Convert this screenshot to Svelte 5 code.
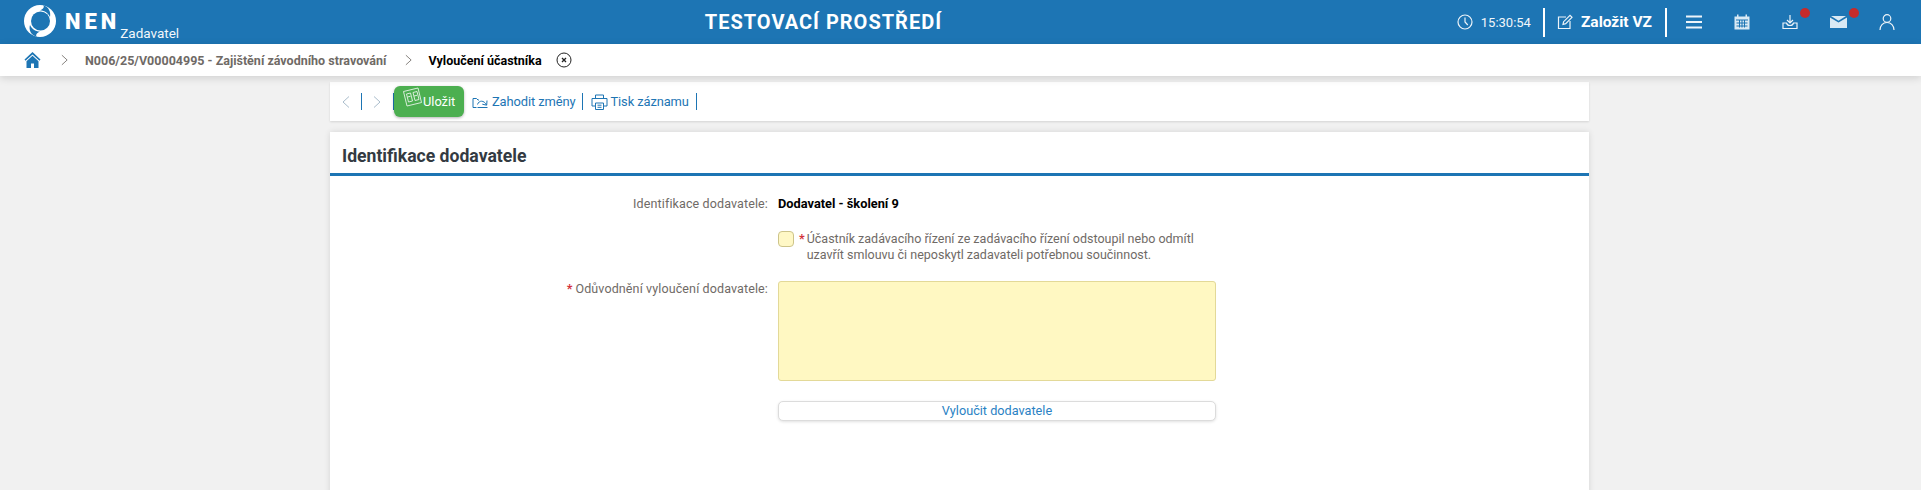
<script>
  const crumbs = "N006/25/V00004995 - Zajištění závodního stravování";
</script>

<div class="page">
  <header class="topbar">
    <div class="brand">
      <svg class="logo" viewBox="0 0 32 32" width="32" height="32">
        <circle cx="16" cy="16" r="16" fill="#fff"/>
        <circle cx="16.500" cy="16" r="9.500" fill="#1d75b4"/>
        <path d="M19 0C25 2 27 7 26 12 24 8 21 5.500 16 5.500 19 4 21 2 19 0z" fill="#1d75b4"/>
        <path d="M13 32C7 30 4.500 25 6 20 8 24 11 26.500 16 26.500 13 28 11 30 13 32z" fill="#1d75b4"/>
      </svg>
      <span class="nen">NEN</span>
      <span class="role">Zadavatel</span>
    </div>
    <div class="env">TESTOVACÍ PROSTŘEDÍ</div>
    <div class="tools">
      <svg class="ic clock" viewBox="0 0 16 16" width="16" height="16"><circle cx="8" cy="8" r="7" /><path d="M8 3.500V8l2.800 3" /></svg>
      <span class="time">15:30:54</span>
      <span class="sep"></span>
      <svg class="ic edit" viewBox="0 0 16 16" width="16" height="16"><path d="M9 3H1.500v11.500H13V7" /><path d="M6 10.500l.6-2.800L13 1.300l2 2-6.300 6.400z" /></svg>
      <span class="create">Založit VZ</span>
      <span class="sep"></span>
      <svg class="ic menu" viewBox="0 0 16 14" width="16" height="14"><path d="M0 1.500h16M0 7h16M0 12.500h16" stroke-width="2"/></svg>
      <svg class="ic cal" viewBox="0 0 16 16" width="16" height="16"><path class="fill" d="M.5 2.500h2.500V.5h1.500v2h7v-2H13v2h2.500V15.500H.5z"/><path class="grid" d="M2 6h12M2.500 9h11M2.500 12h11M5.500 6v7.500M8 6v7.500M10.500 6v7.500"/></svg>
      <span class="badged dl">
        <svg class="ic" viewBox="0 0 16 16" width="16" height="16"><path d="M8 1v7.500M5 6l3 3 3-3" /><path d="M4.500 9H1v5.500h14V9h-3.500c-.5 2-2 2.500-3.500 2.500S5 11 4.500 9z" /></svg>
        <i class="dot"></i>
      </span>
      <span class="badged mail">
        <svg class="ic" viewBox="0 0 17 12" width="17" height="12"><path class="fill" d="M0 1.500l8.500 5 8.500-5V12H0z"/><path class="fill" d="M1 0h15L8.500 4.800z"/></svg>
        <i class="dot"></i>
      </span>
      <svg class="ic user" viewBox="0 0 16 16" width="16" height="16"><circle cx="8" cy="4.500" r="3.800" /><path d="M1 16c0-4.500 3-7.500 7-7.500s7 3 7 7.500" /></svg>
    </div>
  </header>

  <nav class="crumbs">
    <svg class="home" viewBox="0 0 16 16" width="17" height="16"><path d="M8 0L0 7.500l1 1.200L8 2.400l7 6.300 1-1.200z" fill="#1d75b4"/><path d="M8 3.800L2 9.200V16h4.500v-4.500h3V16H14V9.200z" fill="#1d75b4"/></svg>
    <svg class="chev" viewBox="0 0 8 12" width="7" height="12"><path d="M1 .5l6 5.500-6 5.500"/></svg>
    <span class="crumb">{crumbs}</span>
    <svg class="chev" viewBox="0 0 8 12" width="7" height="12"><path d="M1 .5l6 5.500-6 5.500"/></svg>
    <span class="current">Vyloučení účastníka</span>
    <svg class="close" viewBox="0 0 16 16" width="16" height="16"><circle cx="8" cy="8" r="7"/><path d="M6 6l4 4M10 6l-4 4" stroke-width="1.300"/></svg>
  </nav>

  <main class="content">
    <div class="toolbar">
      <svg class="chev dim" viewBox="0 0 8 12" width="8" height="12"><path d="M7 .5L1 6l6 5.500"/></svg>
      <span class="vr first"></span>
      <svg class="chev dim" viewBox="0 0 8 12" width="8" height="12"><path d="M1 .5L7 6l-6 5.500"/></svg>
      <span class="vr second"></span>
      <button class="save">
        <svg viewBox="0 0 21 21" width="21" height="21"><path d="M1.500 4.500L16 1l3.500 14.500L5 19z"/><path d="M4.500 7l4-1 2 8-4 1zM11 5.500l4-1 2 8-4 1zM5.500 10l3-.7M12 9l3-.7"/></svg>
        <span>Uložit</span>
      </button>
      <a class="act discard">
        <svg viewBox="0 0 16 13" width="16" height="13"><path d="M4.500 12.500H1V3.500h3.500l1.500 1.500h1"/><path d="M5.500 9.500C7 5 12 5 14.500 10M15 5.500l-.3 4.700-4.400-1"/><path d="M5.500 12.500h10"/></svg>
        <span>Zahodit změny</span>
      </a>
      <span class="vr"></span>
      <a class="act print">
        <svg viewBox="0 0 17 16" width="17" height="16"><path d="M4.500 4.500V1h8v3.500M4.500 12H1V4.500h15V12h-3.500M4.500 9h8v6.500h-8zM6.500 11.200h4M6.500 13.300h4"/></svg>
        <span>Tisk záznamu</span>
      </a>
      <span class="vr"></span>
    </div>

    <section class="panel">
      <h2>Identifikace dodavatele</h2>
      <div class="form">
        <div class="row r1">
          <div class="label">Identifikace dodavatele:</div>
          <div class="value">Dodavatel - školení 9</div>
        </div>
        <div class="row r2">
          <div class="label"></div>
          <div class="check">
            <span class="box"></span>
            <span class="star">*</span>
            <span class="checktext">Účastník zadávacího řízení ze zadávacího řízení odstoupil nebo odmítl uzavřít smlouvu či neposkytl zadavateli potřebnou součinnost.</span>
          </div>
        </div>
        <div class="row r3">
          <div class="label"><span class="star">*</span>Odůvodnění vyloučení dodavatele:</div>
          <div class="textarea"></div>
        </div>
        <div class="row r4">
          <div class="label"></div>
          <button class="wide">Vyloučit dodavatele</button>
        </div>
      </div>
    </section>
  </main>
</div>

<style>
  :global(body) { margin: 0; background: #f1f1f1; font-family: Roboto, "Liberation Sans", sans-serif; overflow: hidden; }
  .page { height: 490px; overflow: hidden; display: flex; flex-direction: column; }
  .topbar { height: 44px; background: #1d75b4; color: #fff; display: flex; align-items: center; flex: none; }
  .brand { display: flex; align-items: center; padding-left: 24px; height: 44px; width: 166px; flex: none; }
  .logo { display: block; margin-top: -2px; flex: none; }
  .nen { font-size: 22px; line-height: 1; font-weight: 900; letter-spacing: 4px; margin-left: 9px; margin-top: -1px; }
  .role { font-size: 13.500px; line-height: 16px; align-self: flex-end; margin-bottom: 3px; margin-left: 0; opacity: .95; }
  .env { flex: 1; text-align: center; font-size: 20px; line-height: 1; font-weight: 700; letter-spacing: 1px; }
  .tools { display: flex; align-items: center; height: 44px; padding-right: 26px; flex: none; }
  .ic { fill: none; stroke: #fff; stroke-width: 1.200; display: block; flex: none; opacity: .92; }
  .ic .fill { fill: #e9f3fa; stroke: none; }
  .ic .grid { stroke: #1d75b4; stroke-width: 1; }
  .time { font-size: 13px; margin-left: 8px; color: #f1f6fa; }
  .sep { width: 2px; height: 29px; background: #fff; margin-left: 12px; }
  .edit { margin-left: 12px; }
  .create { font-size: 15.500px; font-weight: 700; margin-left: 8px; }
  .create + .sep { margin-left: 13px; }
  .menu { margin-left: 19px; }
  .cal { margin-left: 32px; }
  .badged { position: relative; display: block; }
  .dl { margin-left: 32px; }
  .mail { margin-left: 32px; }
  .dot { position: absolute; width: 10px; height: 10px; background: #c52b2b; border-radius: 50%; top: -6px; left: 18px; }
  .mail .dot { top: -8px; left: 19px; }
  .user { margin-left: 32px; }

  .crumbs { height: 32px; background: #fff; display: flex; align-items: center; flex: none; box-shadow: 0 2px 8px rgba(0,0,0,.14); position: relative; z-index: 1; padding-left: 24px; }
  .home { display: block; flex: none; }
  .chev { fill: none; stroke: #77726e; stroke-width: 1; display: block; flex: none; }
  .crumbs > .chev:nth-of-type(2) { margin-left: 20px; }
  .crumb { font-size: 12.500px; font-weight: 700; color: #6f6a66; margin-left: 17px; }
  .crumb + .chev { margin-left: 19px; }
  .current { font-size: 12.500px; font-weight: 700; color: #000; margin-left: 16px; }
  .close { fill: none; stroke: #222; stroke-width: 1; margin-left: 14px; flex: none; }

  .content { width: 1259px; margin-left: 330px; flex: none; }
  .toolbar { height: 39px; margin-top: 6px; background: #fff; display: flex; align-items: center; box-shadow: 0 1px 2px rgba(0,0,0,.12); padding-left: 12px; font-size: 12.500px; }
  .dim { stroke: #a9bccb; }
  .vr { width: 1px; height: 17px; background: #1d75b4; display: block; flex: none; margin-left: 7px; }
  .vr.first { margin: 0 11px; }
  .vr.second { margin-left: 12px; }
  .save { height: 31px; width: 70px; background: #4caf50; color: #fff; border: 0; border-radius: 6px; padding: 0; display: flex; align-items: center; font: 12.800px Roboto, sans-serif; box-shadow: 0 1px 3px rgba(0,0,0,.3); flex: none; }
  .save svg { fill: none; stroke: #e6f3e6; stroke-width: .9; margin-left: 8px; margin-top: -9px; flex: none; }
  .act { color: #1d75b4; display: flex; align-items: center; white-space: nowrap; }
  .act svg { fill: none; stroke: #1d75b4; stroke-width: 1; margin-right: 4px; flex: none; }
  .act span { font-size: 12.900px; letter-spacing: -.1px; }
  .discard { margin-left: 8px; }
  .print { margin-left: 8px; }
  .print svg { margin-right: 2px; }
  .print + .vr { margin-left: 7px; }

  .panel { margin-top: 11px; background: #fff; height: 400px; box-shadow: 0 0 6px rgba(0,0,0,.12); }
  h2 { margin: 0; height: 33px; padding: 8px 0 0 12px; border-bottom: 3px solid #1d75b4; font-size: 17.600px; font-weight: 700; color: #333a42; line-height: 33px; }
  .form { padding-top: 19px; font-size: 12.500px; color: #6f6a66; }
  .row { display: grid; grid-template-columns: 438px 438px; column-gap: 10px; }
  .label { text-align: right; line-height: 18px; letter-spacing: .12px; }
  .star { color: #d3323c; font-weight: 700; margin-right: 3px; }
  .value { color: #000; font-weight: 700; line-height: 18px; font-size: 12.800px; }
  .r2 { margin-top: 18px; }
  .check { display: flex; align-items: flex-start; }
  .box { box-sizing: border-box; width: 16px; height: 16px; background: #fff8c6; border: 1px solid #cdc48a; border-radius: 4px; flex: none; }
  .check .star { margin: 0 0 0 5px; flex: none; line-height: 16px; }
  .checktext { line-height: 16px; margin-left: 2px; width: 410px; }
  .r3 { margin-top: 18px; }
  .r3 .label { line-height: 16px; }
  .textarea { height: 98px; background: #fff8c2; border: 1px solid #e3d998; border-radius: 3px; }
  .r4 { margin-top: 20px; }
  .wide { height: 20px; background: #fff; border: 1px solid #dcdcdc; border-radius: 5px; box-shadow: 0 1px 3px rgba(0,0,0,.12); color: #2a82c4; font: 12.700px/16px Roboto, sans-serif; padding: 0; }
</style>
